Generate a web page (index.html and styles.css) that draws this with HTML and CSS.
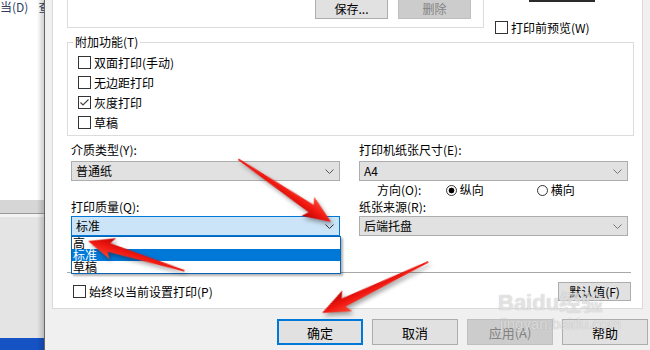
FILE: index.html
```html
<!DOCTYPE html>
<html lang="zh-CN">
<head>
  <meta charset="UTF-8" />
  <title>打印首选项</title>
  <link rel="stylesheet" href="styles.css">
</head>
<body>
  <div class="screen">
    <aside class="backwin">
      <div class="menubar"><span>当(D)</span><span>查</span></div>
      <div class="bw-white"></div>
      <div class="bw-band"></div>
      <div class="bw-gray"></div>
      <div class="bw-task"></div>
    </aside>

    <div class="dialog">
      <div class="page">
        <div class="top-row">
          <div class="preset-box">
            <button class="btn">保存...</button>
            <button class="btn" disabled>删除</button>
          </div>
          <div class="preview-col">
            <div class="dark-edge"></div>
            <label class="check preview"><span class="box"></span>打印前预览(W)</label>
          </div>
        </div>

        <div class="group">
          <div class="legend">附加功能(T)</div>
          <div class="checks">
            <label class="check"><span class="box"></span>双面打印(手动)</label>
            <label class="check"><span class="box"></span>无边距打印</label>
            <label class="check"><span class="box"><svg width="11" height="11" viewBox="0 0 11 11"><polyline points="1.5,5.5 4,8 9.5,2.5" fill="none" stroke="#444" stroke-width="1.2"/></svg></span>灰度打印</label>
            <label class="check"><span class="box"></span>草稿</label>
          </div>
        </div>

        <div class="fields">
          <div class="col">
            <div class="lbl">介质类型(Y):</div>
            <div class="select">普通纸<svg class="chev" width="9" height="5" viewBox="0 0 9 5"><polyline points="0.5,0.5 4.5,4.5 8.5,0.5" fill="none" stroke="#555"/></svg></div>
            <div class="lbl lbl-second">打印质量(Q):</div>
            <div class="select select-second focus">标准<svg class="chev" width="9" height="5" viewBox="0 0 9 5"><polyline points="0.5,0.5 4.5,4.5 8.5,0.5" fill="none" stroke="#333"/></svg>
              <ul class="droplist">
                <li>高</li>
                <li class="active">标准</li>
                <li>草稿</li>
              </ul>
            </div>
          </div>
          <div class="col">
            <div class="lbl">打印机纸张尺寸(E):</div>
            <div class="select">A4<svg class="chev" width="9" height="5" viewBox="0 0 9 5"><polyline points="0.5,0.5 4.5,4.5 8.5,0.5" fill="none" stroke="#777"/></svg></div>
            <div class="orient">
              <span class="orient-label">方向(O):</span>
              <span class="radio"><span class="dot on"></span>纵向</span>
              <span class="radio"><span class="dot"></span>横向</span>
            </div>
            <div class="lbl lbl-source">纸张来源(R):</div>
            <div class="select select-second">后端托盘<svg class="chev" width="9" height="5" viewBox="0 0 9 5"><polyline points="0.5,0.5 4.5,4.5 8.5,0.5" fill="none" stroke="#777"/></svg></div>
          </div>
        </div>

        <div class="sep"></div>

        <div class="bottom-row">
          <label class="check"><span class="box"></span>始终以当前设置打印(P)</label>
          <button class="btn small">默认值(F)</button>
        </div>
      </div>

      <div class="actions">
        <button class="btn primary">确定</button>
        <button class="btn">取消</button>
        <button class="btn" disabled>应用(A)</button>
        <button class="btn">帮助</button>
      </div>
    </div>

    <svg class="arrows" width="650" height="350" viewBox="0 0 650 350">
      <defs>
        <linearGradient id="red" gradientUnits="userSpaceOnUse" x1="0" y1="-12" x2="0" y2="12">
          <stop offset="0" stop-color="#ff4a36"/>
          <stop offset="0.5" stop-color="#f01810"/>
          <stop offset="1" stop-color="#b80000"/>
        </linearGradient>
      </defs>
      <g class="arrow-set">
        <polygon transform="translate(331,222) rotate(34.1)" fill="url(#red)"
          points="-112,-0.7 -24,-4.5 -28,-11.5 0,0 -28,11.5 -24,4.5 -112,0.7"/>
        <polygon transform="translate(88,241) rotate(197.2)" fill="url(#red)"
          points="-101,-0.7 -22,-4.5 -26,-11 0,0 -26,11 -22,4.5 -101,0.7"/>
        <polygon transform="translate(322,313) rotate(154.3)" fill="url(#red)"
          points="-118,-0.7 -24,-4.5 -28,-11.5 0,0 -28,11.5 -24,4.5 -118,0.7"/>
      </g>
    </svg>

    <div class="watermark">
      <div class="wm-logo">Baidu经验</div>
      <div class="wm-url">jingyan.baidu.com</div>
    </div>
  </div>
</body>
</html>
```

FILE: styles.css
```css
* {
  box-sizing: border-box;
}

body {
  margin: 0;
  width: 650px;
  height: 350px;
  overflow: hidden;
  font-family: "Noto Sans CJK SC", "Microsoft YaHei", sans-serif;
  font-size: 12px;
  color: #000;
}

.screen {
  position: relative;
  display: flex;
  width: 650px;
  height: 350px;
  overflow: hidden;
}

/* window behind the dialog */
.backwin {
  position: relative;
  width: 45px;
  flex: none;
  display: flex;
  flex-direction: column;
  background: #fff;
  border-right: 1px solid #666;
  overflow: hidden;
}

.backwin::after {
  content: "";
  position: absolute;
  top: 0;
  right: 0;
  bottom: 0;
  width: 7px;
  background: linear-gradient(to right, rgba(0,0,0,0), rgba(0,0,0,0.18));
}

.menubar {
  height: 16px;
  display: flex;
  gap: 10px;
  white-space: nowrap;
  line-height: 14px;
  color: #2e3f62;
}

.bw-white {
  height: 184px;
}

.bw-band {
  height: 14px;
  background: #d6d6d6;
  border-bottom: 1px solid #9a9a9a;
}

.bw-gray {
  flex: 1;
  background: #e4e4e4;
  border-top: 3px solid #f3f3f3;
}

.bw-task {
  height: 12px;
  background: #1552c4;
}

/* dialog */
.dialog {
  flex: 1;
  display: flex;
  flex-direction: column;
  background: #f0f0f0;
  padding: 0 7px;
}

.page {
  height: 309px;
  background: #fff;
  border: 1px solid #d9d9d9;
  border-top: none;
}

.btn {
  font: inherit;
  font-size: 12px;
  color: #000;
  background: #e1e1e1;
  border: 1px solid #adadad;
  padding: 0;
}

.btn:disabled {
  background: #cccccc;
  border-color: #bfbfbf;
  color: #838383;
}

.top-row {
  display: flex;
  height: 28px;
}

.preset-box {
  margin-left: 14px;
  width: 417px;
  height: 28px;
  border: 1px solid #dcdcdc;
  border-top: none;
  display: flex;
  justify-content: flex-end;
  align-items: flex-start;
  gap: 10px;
  padding-right: 12px;
}

.preset-box .btn {
  width: 73px;
  height: 22px;
  margin-top: -3px;
}

.preview-col {
  flex: 1;
}

.dark-edge {
  margin-left: 45px;
  width: 66px;
  height: 2px;
  background: #2b2b2b;
}

.check {
  display: flex;
  align-items: center;
  gap: 3px;
  height: 20px;
  white-space: nowrap;
}

.check.preview {
  margin: 18px 0 0 11px;
  height: 14px;
}

.box {
  width: 13px;
  height: 13px;
  border: 1px solid #333;
  background: #fff;
  display: flex;
  align-items: center;
  justify-content: center;
}

.group {
  margin: 14px 0 0 14px;
  width: 567px;
  height: 94px;
  border: 1px solid #dcdcdc;
}

.legend {
  width: fit-content;
  margin: -8px 0 0 5px;
  padding: 0 2px;
  background: #fff;
  height: 14px;
  line-height: 14px;
}

.checks {
  margin-top: 3px;
  padding-left: 10px;
}

.fields {
  display: flex;
  gap: 19px;
  margin: 7px 0 0 18px;
}

.col {
  width: 269px;
}

.lbl {
  height: 14px;
  line-height: 14px;
  white-space: nowrap;
}

.lbl-second {
  margin-top: 19px;
}

.lbl-source {
  margin-top: 3px;
}

.select {
  position: relative;
  height: 20px;
  margin-top: 4px;
  border: 1px solid #adadad;
  background: #e1e1e1;
  display: flex;
  align-items: center;
  justify-content: space-between;
  padding: 0 5px 0 4px;
  line-height: 14px;
}

.select-second {
  margin-top: 2px;
}

.select.focus {
  background: #cce4f7;
  border-color: #0078d7;
}

.droplist {
  position: absolute;
  top: calc(100% + 1px);
  left: -1px;
  right: -2px;
  margin: 0;
  padding: 0;
  list-style: none;
  background: #fff;
  border: 1px solid #0a64b4;
  box-shadow: 2px 2px 2px rgba(0,0,0,0.3);
}

.droplist li {
  height: 12px;
  line-height: 12px;
  padding-left: 1px;
}

.droplist li.active {
  background: #0078d7;
  color: #fff;
}

.orient {
  display: flex;
  align-items: center;
  height: 14px;
  margin-top: 2px;
  line-height: 14px;
}

.orient-label {
  width: 88px;
  padding-left: 18px;
}

.radio {
  display: flex;
  align-items: center;
  gap: 3px;
  width: 93px;
}

.dot {
  width: 11px;
  height: 11px;
  border: 1px solid #333;
  border-radius: 50%;
  background: #fff;
}

.dot.on {
  background: radial-gradient(circle, #000 0 2.6px, #fff 3.2px);
}

.sep {
  margin: 36px 0 0 14px;
  width: 564px;
  height: 1px;
  background: #a8a8a8;
}

.bottom-row {
  display: flex;
  align-items: center;
  justify-content: space-between;
  margin: 9px 11px 0 20px;
  height: 19px;
}

.btn.small {
  width: 73px;
  height: 19px;
  line-height: 17px;
}

.actions {
  display: flex;
  justify-content: flex-end;
  gap: 9px;
  margin: 10px -5px 0 0;
}

.actions .btn {
  width: 86px;
  height: 26px;
  font-size: 13px;
}

.actions .btn.primary {
  border: 2px solid #0078d7;
}

/* annotations drawn over the screenshot */
.arrows {
  position: absolute;
  top: 0;
  left: 0;
  pointer-events: none;
}

.arrow-set {
  filter: drop-shadow(2px 3px 2px rgba(0,0,0,0.35));
}

.watermark {
  position: absolute;
  left: 498px;
  top: 290px;
  color: rgba(255,255,255,0.6);
  text-shadow: 0 0 1px rgba(120,120,120,0.55);
  pointer-events: none;
  font-family: "Liberation Sans", "Noto Sans CJK SC", sans-serif;
}

.wm-logo {
  font-size: 22px;
  font-weight: bold;
  line-height: 26px;
}

.wm-url {
  font-size: 15px;
  line-height: 16px;
  margin-left: 2px;
}
```
